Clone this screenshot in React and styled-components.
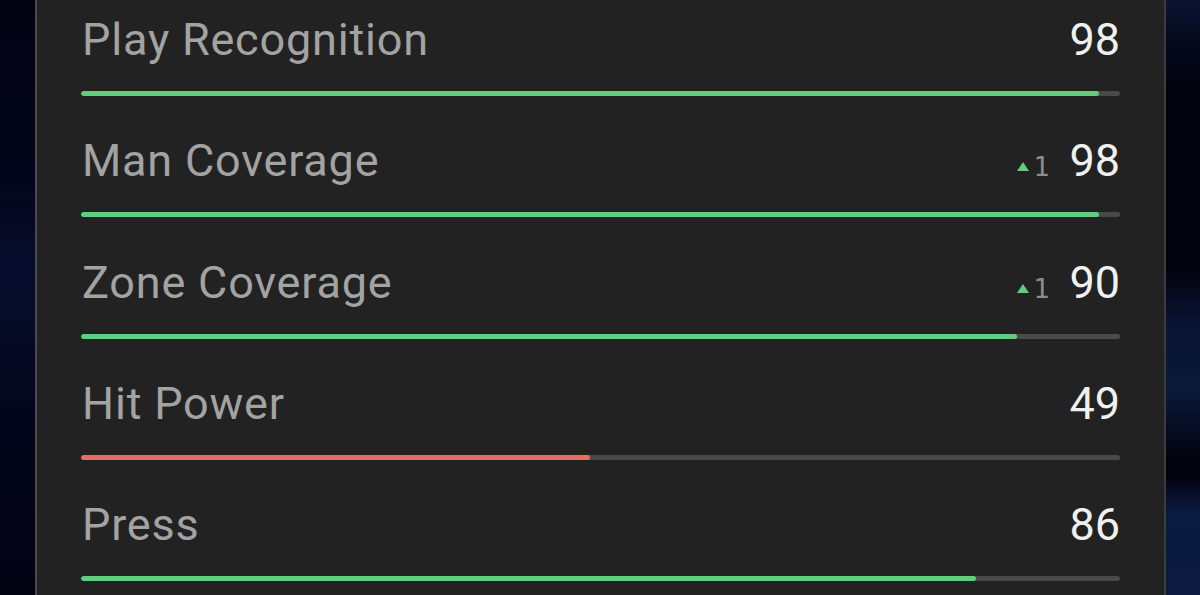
import React from "react";
import styled, { createGlobalStyle } from "styled-components";

const Global = createGlobalStyle`
  html, body { margin: 0; padding: 0; }
  body {
    width: 1200px;
    height: 595px;
    overflow: hidden;
    background: #02040f;
    font-family: Roboto, "Noto Sans", sans-serif;
  }
`;

const Stage = styled.div`
  display: flex;
  padding: 0 34px 0 35px;
  height: 595px;
  box-sizing: border-box;
  background-image:
    linear-gradient(180deg,
      #020414 0%, #03061a 30%, #060c2c 45%, #050a26 55%, #03061a 70%, #020414 100%),
    linear-gradient(180deg,
      #0b1533 0%, #050a1e 6%, #02030e 15%, #02030e 45%, #0a1535 55%, #0b1838 66%,
      #02030f 77%, #02030f 80%, #0a1a40 86%, #0b1a3e 100%);
  background-size: 36px 100%, 36px 100%;
  background-position: left top, right top;
  background-repeat: no-repeat;
`;

const Panel = styled.div`
  flex: 1;
  background: #222222;
  border-left: 2px solid #4a4a4a;
  border-right: 2px solid #3c3c3c;
  padding: 0 44px 0 44px;
  display: flex;
  flex-direction: column;
  margin-top: -13px;
`;

const Row = styled.div`
  height: 121.2px;
  display: flex;
  flex-direction: column;
  justify-content: flex-end;
  padding-bottom: 12px;
  box-sizing: border-box;
  flex-shrink: 0;
`;

const Header = styled.div`
  display: flex;
  align-items: baseline;
  justify-content: space-between;
  height: 50px;
  line-height: 50px;
`;

const Label = styled.span`
  font-size: 45px;
  letter-spacing: 0.8px;
  color: #a3a3a3;
  padding-left: 1px;
`;

const Right = styled.div`
  display: flex;
  align-items: baseline;
`;

const Delta = styled.span`
  margin-right: 20px;
  color: #8c8c8c;
  font-family: "DejaVu Sans Mono", monospace;
  font-size: 27px;
`;

const Tri = styled.svg`
  display: inline-block;
  width: 12px;
  height: 9px;
  margin-right: 4px;
  vertical-align: 5px;
`;

const Value = styled.span`
  font-size: 45px;
  color: #f0f0f0;
`;

const Track = styled.div`
  margin-top: 26px;
  height: 5px;
  border-radius: 3px;
  background: #4a4a4a;
  overflow: hidden;
`;

const Fill = styled.div`
  height: 100%;
  border-radius: 3px;
  background: ${(p) => (p.$low ? "#e56d62" : "#5fcf7e")};
`;

const stats = [
  { name: "Play Recognition", value: 98, fill: 98.0 },
  { name: "Man Coverage", value: 98, delta: 1, fill: 98.0 },
  { name: "Zone Coverage", value: 90, delta: 1, fill: 90.1 },
  { name: "Hit Power", value: 49, fill: 49.0, low: true },
  { name: "Press", value: 86, fill: 86.1 },
];

export default function App() {
  return (
    <>
      <Global />
      <Stage>
        <Panel>
          {stats.map((s) => (
            <Row key={s.name}>
              <Header>
                <Label>{s.name}</Label>
                <Right>
                  {s.delta ? (
                    <Delta>
                      <Tri viewBox="0 0 12 9">
                        <polygon points="6,0 12,9 0,9" fill="#5fcf7e" />
                      </Tri>
                      {s.delta}
                    </Delta>
                  ) : null}
                  <Value>{s.value}</Value>
                </Right>
              </Header>
              <Track>
                <Fill $low={s.low} style={{ width: `${s.fill}%` }} />
              </Track>
            </Row>
          ))}
        </Panel>
      </Stage>
    </>
  );
}
